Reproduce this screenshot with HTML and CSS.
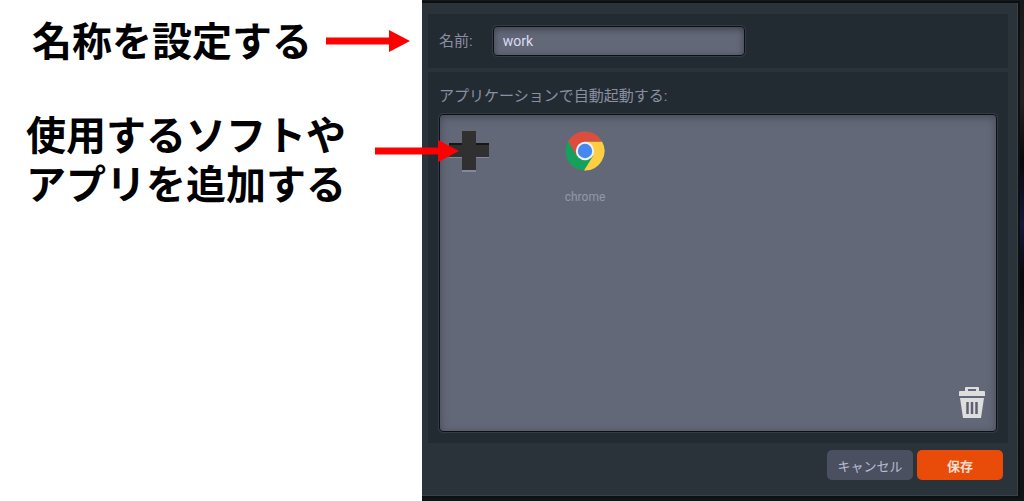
FILE: index.html
```
<!doctype html>
<html lang="ja">
	<head>
		<meta charset="utf-8">
		<title>work</title>
		<link rel="stylesheet" href="styles.css">
	</head>
	<body>
		<div class="guide">
			<div class="note">
				<p>名称を設定する</p>
				<svg class="arrow" width="84" height="22" viewBox="0 0 84 22">
					<path d="M0 7.5H63V0L84 11 63 22V14.5H0Z" fill="#fe0000"/>
				</svg>
			</div>
			<div class="note noteApps">
				<p>使用するソフトや<br>アプリを追加する</p>
				<svg class="arrow" width="84" height="22" viewBox="0 0 84 22">
					<path d="M0 7.5H63V0L84 11 63 22V14.5H0Z" fill="#fe0000"/>
				</svg>
			</div>
		</div>

		<div class="backdrop">
			<form class="dialog">
				<div class="panel nameRow">
					<label for="name">名前:</label>
					<input id="name" type="text" value="work">
				</div>

				<div class="panel apps">
					<h3>アプリケーションで自動起動する:</h3>
					<div class="appList">
						<button class="add" type="button" aria-label="追加">
							<svg width="40" height="41" viewBox="0 0 40 41">
								<path d="M13 1H27V13H40V27H27V41H13V27H0V13H13Z" fill="#858997"/>
								<path d="M13 0H27V12H40V26H27V39H13V26H0V12H13Z" fill="#303030"/>
								<path d="M0 12H13V14H0ZM27 12H40V14H27Z" fill="#161616"/>
							</svg>
						</button>
						<div class="app">
							<svg width="40" height="40" viewBox="0 0 40 40">
								<circle cx="20" cy="20" r="19.5" fill="#16a05c"/>
								<path d="M20 10.5H37A19.5 19.5 0 0 1 19 39.5L28.2 24.8Z" fill="#ffce43"/>
								<path d="M3.1 10.3A19.5 19.5 0 0 1 37 10.5H20L11.8 24.8Z" fill="#dc4c3f"/>
								<circle cx="20" cy="20" r="9.2" fill="#edf0f5"/>
								<circle cx="20" cy="20" r="7.2" fill="#4688f1"/>
							</svg>
							<span>chrome</span>
						</div>
						<button class="trash" type="button" aria-label="削除">
							<svg width="26" height="33" viewBox="0 0 26 33">
								<path d="M0 10V6Q0 5 1 5H6V2Q6 1 7 1H19Q20 1 20 2V5H25Q26 5 26 6V10ZM9 5H17V3H9Z" fill="#dedede" fill-rule="evenodd"/>
								<path d="M1 12H25L22 32H4Z" fill="#dedede"/>
								<path d="M8.500 16V28M13 16V28M17.500 16V28" stroke="#5c6170" stroke-width="2.500"/>
							</svg>
						</button>
					</div>
				</div>

				<div class="buttons">
					<button class="cancel" type="button">キャンセル</button>
					<button class="save" type="submit">保存</button>
				</div>
			</form>
		</div>
	</body>
</html>
```

FILE: styles.css
```
html, body {
	margin: 0;
	padding: 0;
	font-family: Roboto, "Noto Sans CJK JP", sans-serif;
}

body {
	display: flex;
	min-height: 100vh;
	background-color: white;
}

.guide {
	flex: 0 0 422px;
	box-sizing: border-box;
	min-width: 0;
	padding: 15px 0 0 26px;
}

.note {
	display: flex;
	align-items: flex-start;
	position: relative;
	z-index: 1;
	padding-left: 6px;
}

.note p {
	margin: 0;
	font: bold 40px/49px "Noto Sans CJK JP", sans-serif;
	color: black;
	white-space: nowrap;
}

.arrow {
	flex: none;
	margin: 15px 0 0 14px;
}

.noteApps {
	margin-top: 45px;
	padding-left: 0;
}

/* runs over the edge of the dialog */
.noteApps .arrow {
	margin: 31px 0 0 29px;
}

.backdrop {
	flex: 1;
	display: flex;
	min-width: 0;
	overflow: hidden;
	padding: 3px 6px 5px 0;
	background: linear-gradient(#16191b, #24211f 20%, #08090c 32%, #14183a 45%, #08090c 55%, #171a1c 75%, #111416);
}

.dialog {
	flex: 1;
	display: flex;
	flex-direction: column;
	gap: 4px;
	min-width: 0;
	padding: 11px 9px 15px 6px;
	border: 1px solid #3a4147;
	border-width: 0 1px 1px 0;
	background-color: #2a333a;
	box-shadow: 0 0 0 2px #0c0f12;
}

.panel {
	padding: 0 11px 11px;
	background-color: #232b32;
}

.nameRow {
	display: flex;
	align-items: center;
	padding: 12px 11px;
}

.nameRow label,
.apps h3 {
	font-size: 15px;
	font-weight: normal;
	line-height: 22px;
	color: #8b8fa3;
}

.nameRow input {
	box-sizing: border-box;
	width: 252px;
	height: 30px;
	margin-left: 20px;
	padding: 0 9px;
	border: 1px solid #0c0f14;
	border-radius: 4px;
	background-color: #636879;
	box-shadow: inset 0 2px 7px #3b3e48, 0 0 0 1px #343b44;
	font: 14px Roboto, sans-serif;
	color: #d9dcf2;
}

.apps {
	flex: 1;
	display: flex;
	flex-direction: column;
}

.apps h3 {
	margin: 13px 0 7px;
}

.appList {
	flex: 1;
	display: flex;
	align-items: flex-start;
	position: relative;
	padding: 16px 9px;
	border: 1px solid #0c0f14;
	border-radius: 4px;
	background-color: #636879;
	box-shadow: inset 0 2px 8px #444853, 0 0 0 1px #343b44;
}

button {
	border: 0 none;
	padding: 0;
	cursor: pointer;
}

.add,
.trash {
	background: none;
}

.add svg,
.trash svg {
	display: block;
}

.app {
	width: 80px;
	margin-left: 56px;
	text-align: center;
}

.app svg {
	display: block;
	margin: 0 auto 18px;
}

.app span {
	display: block;
	font-size: 12px;
	line-height: 16px;
	color: #9397a9;
}

.trash {
	position: absolute;
	right: 11px;
	bottom: 12px;
}

.buttons {
	display: flex;
	justify-content: flex-end;
	gap: 4px;
	padding: 3px 5px 0 0;
}

.buttons button {
	width: 86px;
	height: 30px;
	border-radius: 5px;
	font-size: 13px;
	font-family: "Noto Sans CJK JP", sans-serif;
}

.buttons .cancel {
	background-color: #4b5060;
	color: #b9bdd2;
}

.buttons .save {
	background-color: #e84c08;
	color: #f6dcd0;
	font-weight: bold;
}
```
